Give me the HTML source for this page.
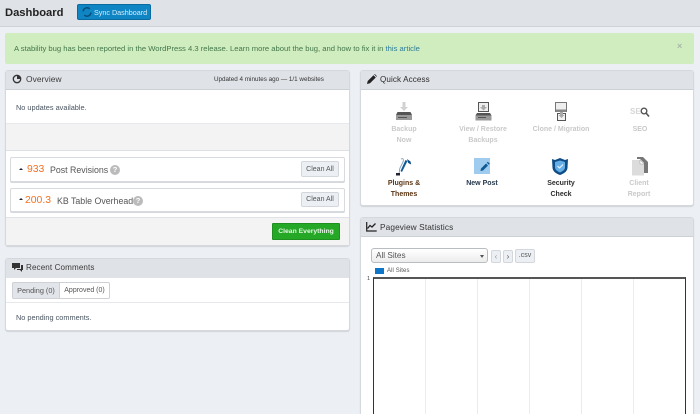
<!DOCTYPE html>
<html><head><meta charset="utf-8">
<style>
html,body{margin:0;padding:0;overflow:hidden;width:700px;height:414px}
body{background:#ecf0f5;position:relative;font-family:"Liberation Sans",sans-serif;font-size:8px;color:#444}
div,span,svg{position:absolute;box-sizing:border-box;white-space:nowrap}
#w{left:0;top:0;width:700px;height:414px;overflow:hidden;background:#ecf0f5;filter:blur(.25px)}
.panel{background:#fff;border:1px solid #d5d8dd;border-radius:3px;box-shadow:0 1px 1px #d0d3d8}
.ph{background:#dfe2e7;border-bottom:1px solid #ccd0d5}
.ttl{font-size:8.1px;color:#3b3b3b;letter-spacing:.1px}
.row{background:#fff;border:1px solid #d7dade;border-radius:2px;box-shadow:0 1px 0 #d5d8dd}
.btn{background:#ecf0f4;border:1px solid #d3d7dc;border-radius:2px;text-align:center;color:#555;font-size:7px;line-height:15px}
.q{width:10px;height:10px;border-radius:50%;background:#bbb;color:#fff;font-size:7.500px;font-weight:bold;line-height:10px;text-align:center}
.num{font-size:10.400px;color:#f37021}
.lbl{font-size:8.800px;color:#555}
.ic{width:80px;text-align:center;font-size:7px;line-height:11px;font-weight:bold;color:#c9c9c9;white-space:normal}
.on{color:#3c3c3c}
.g{top:279px;width:1px;height:135px;background:#ececec}
</style></head><body>
<div id="w">

<div style="left:0;top:0;width:700px;height:27px;background:#dfe2e7;border-bottom:1px solid #cfd2d7"></div>
<div style="left:5px;top:6px;font-size:11.200px;font-weight:bold;color:#222;line-height:15px">Dashboard</div>
<div style="left:77px;top:4px;width:74px;height:16px;background:#0f85c4;border:1px solid #0b6aa0;border-radius:2px"></div>
<svg style="left:82px;top:7px" width="10" height="10" viewBox="0 0 9 9"><path d="M1 4a3.500 3.500 0 0 1 6-2.200M8 5a3.500 3.500 0 0 1-6 2.200" fill="none" stroke="#0a4f7c" stroke-width="1.400"/></svg>
<div style="left:94px;top:7px;font-size:7.200px;line-height:11px;color:#d7eefa">Sync Dashboard</div>

<div style="left:5px;top:33px;width:689px;height:31px;background:#d0edbf;border-radius:2px"></div>
<div style="left:14px;top:43px;font-size:7.650px;line-height:11px;color:#44774b">A stability bug has been reported in the WordPress 4.3 release. Learn more about the bug, and how to fix it in <span style="position:static;color:#2d7b98">this article</span></div>
<div style="left:677px;top:41px;font-size:9px;line-height:10px;color:#a9b7a5;font-weight:bold">×</div>

<!-- Overview -->
<div class="panel" style="left:5px;top:70px;width:345px;height:176px"></div>
<div class="ph" style="left:6px;top:71px;width:343px;height:19px"></div>
<svg style="left:12px;top:74px" width="10" height="10" viewBox="0 0 10 10"><circle cx="5" cy="5" r="3.700" fill="none" stroke="#333" stroke-width="1.300"/><path d="M5 5V1.200A3.800 3.800 0 0 1 8.800 5z" fill="#333"/></svg>
<div class="ttl" style="left:26px;top:74px;line-height:11px;font-size:8.400px">Overview</div>
<div style="left:214px;top:75px;font-size:6.300px;line-height:10px;color:#333">Updated 4 minutes ago — 1/1 websites</div>
<div style="left:16px;top:102px;font-size:7.350px;line-height:11px;color:#4a5560">No updates available.</div>
<div style="left:6px;top:123px;width:343px;height:28px;background:#f3f3f3;border-top:1px solid #e6e8eb;border-bottom:1px solid #dde0e5"></div>

<div class="row" style="left:10px;top:157px;width:335px;height:25px"></div>
<div style="left:19px;top:168px;width:0;height:0;border:2px solid transparent;border-bottom:2px solid #223;border-top:0"></div>
<div class="num" style="left:27px;top:163px;line-height:14px">933</div>
<div class="lbl" style="left:50px;top:164px;line-height:13px">Post Revisions</div>
<div class="q" style="left:110px;top:165px">?</div>
<div class="btn" style="left:301px;top:161px;width:38px;height:16px">Clean All</div>

<div class="row" style="left:10px;top:188px;width:335px;height:24px"></div>
<div style="left:19px;top:198px;width:0;height:0;border:2px solid transparent;border-bottom:2px solid #223;border-top:0"></div>
<div class="num" style="left:25px;top:193px;line-height:15px">200.3</div>
<div class="lbl" style="left:57px;top:194px;line-height:14px">KB Table Overhead</div>
<div class="q" style="left:133px;top:196px">?</div>
<div class="btn" style="left:301px;top:192px;width:38px;height:15px;line-height:14px">Clean All</div>

<div style="left:6px;top:217px;width:343px;height:28px;background:#f3f3f3;border-top:1px solid #dfe2e6"></div>
<div style="left:272px;top:223px;width:68px;height:17px;background:#25a825;border:1px solid #1f8f1f;border-radius:1px;color:#e4f5e4;font-size:6.800px;font-weight:bold;line-height:15px;text-align:center">Clean Everything</div>

<!-- Recent comments -->
<div class="panel" style="left:5px;top:258px;width:345px;height:73px"></div>
<div class="ph" style="left:6px;top:259px;width:343px;height:19px;border-bottom:0"></div>
<svg style="left:12px;top:263px" width="11" height="10" viewBox="0 0 11 10"><path d="M0 0h8v5H4L2 7V5H0z" fill="#333"/><path d="M9 2h2v5h-1v2L8 7H5V6h4z" fill="#333"/></svg>
<div class="ttl" style="left:26px;top:262px;line-height:11px">Recent Comments</div>
<div style="left:12px;top:282px;width:48px;height:17px;background:#e2e5ea;border:1px solid #cdd1d6;border-radius:2px 0 0 2px;font-size:7.300px;line-height:15px;text-align:center;color:#555">Pending (0)</div>
<div style="left:60px;top:282px;width:50px;height:17px;background:#fff;border:1px solid #cdd1d6;border-left:0;border-radius:0 2px 2px 0;font-size:7px;line-height:16px;text-align:center;color:#555">Approved (0)</div>
<div style="left:6px;top:302px;width:343px;height:1px;background:#e6e8eb"></div>
<div style="left:16px;top:312px;font-size:7.350px;line-height:11px;color:#4a5560">No pending comments.</div>

<!-- Quick Access -->
<div class="panel" style="left:360px;top:70px;width:334px;height:136px"></div>
<div class="ph" style="left:361px;top:71px;width:332px;height:19px"></div>
<svg style="left:367px;top:74px" width="10" height="10" viewBox="0 0 10 10"><path d="M0 10l.7-3L6.500 1.200l2.300 2.300L3 9.300zM7.200.5l.6-.5 2.200 2.200-.5.6z" fill="#222"/></svg>
<div class="ttl" style="left:380px;top:74px;line-height:11px;color:#2c2c2c">Quick Access</div>

<!-- icons row 1 -->
<svg style="left:395px;top:102px" width="18" height="19" viewBox="0 0 18 19"><path d="M7.500 0h3v5H13l-4 4-4-4h2.500z" fill="#d2d2d2"/><path d="M2.500 10h13l1.500 3H1z" fill="#555"/><rect x="1" y="13" width="16" height="5" fill="#999"/><rect x="3" y="15" width="9" height="1" fill="#555"/></svg>
<div class="ic" style="left:364px;top:124px">Backup<br>Now</div>

<svg style="left:475px;top:102px" width="17" height="19" viewBox="0 0 17 19"><rect x="3.500" y="0.500" width="10" height="9" fill="#eee" stroke="#555"/><path d="M7 3h3v2h2l-3.500 3.500L5 5h2z" fill="#aaa"/><path d="M2 11h13l1.500 2.500H.5z" fill="#555"/><rect x=".5" y="13.500" width="16" height="5" fill="#999"/><rect x="3" y="15" width="8" height="1" fill="#555"/></svg>
<div class="ic" style="left:443px;top:124px">View / Restore<br>Backups</div>

<svg style="left:555px;top:102px" width="13" height="19" viewBox="0 0 13 19"><rect x=".5" y=".5" width="11" height="9" fill="#eee" stroke="#777"/><rect x="1" y="7.500" width="10" height="2.500" fill="#888"/><rect x="2.500" y="11.500" width="8" height="7" fill="#f3f3f3" stroke="#555"/><path d="M5 10h3v3h1.500L6.500 16 3.500 13H5z" fill="#aaa"/></svg>
<div class="ic" style="left:519px;top:124px;width:84px">Clone / Migration</div>

<div style="left:630px;top:107px;font-size:8px;line-height:10px;font-weight:bold;color:#d5d5d5">SE</div>
<svg style="left:640px;top:107px" width="10" height="11" viewBox="0 0 10 11"><circle cx="4" cy="4" r="2.800" fill="none" stroke="#555" stroke-width="1.400"/><path d="M6 6l3 3.500" stroke="#555" stroke-width="1.600"/></svg>
<div class="ic" style="left:600px;top:124px">SEO</div>

<!-- icons row 2 -->
<svg style="left:395px;top:157px" width="18" height="19" viewBox="0 0 18 19"><path d="M6 2C8 1 9 2 8 5L5 11C4 13 5 14 4 16" fill="none" stroke="#8aa9c7" stroke-width="1"/><path d="M10.500 3L5.500 14l1.500 1L12.500 4z" fill="#0f5a94"/><path d="M12 2l3.500 2.500.7 3-3-1.500z" fill="#0f4c80"/><rect x="1" y="16" width="4" height="2.500" fill="#223"/></svg>
<div class="ic on" style="left:364px;top:178px;color:#5a3514">Plugins &amp;<br>Themes</div>

<svg style="left:474px;top:158px" width="17" height="17" viewBox="0 0 17 17"><rect width="16" height="16" fill="#9ecbee"/><path d="M6.500 13l.5-2.500 5-5 2 2-5 5zM12.800 4.700l1-1 2 2-1 1z" fill="#0f5a94"/></svg>
<div class="ic on" style="left:442px;top:178px;color:#26384d">New Post</div>

<svg style="left:552px;top:158px" width="16" height="17" viewBox="0 0 16 17"><path d="M0 1l3 1 5-2 5 2 3-1-.5 9C15 14 11 16 8 17 5 16 1 14 .5 10z" fill="#0f4d86"/><path d="M3 4l5-1.500L13 4v5.500C13 12 10 13.500 8 14.500 6 13.500 3 12 3 9.500z" fill="#66aee6"/><path d="M5.500 8l2 2 3.500-3.500" fill="none" stroke="#dceefa" stroke-width="1.300"/></svg>
<div class="ic on" style="left:521px;top:178px;color:#2c2c2c">Security<br>Check</div>

<svg style="left:631px;top:157px" width="18" height="19" viewBox="0 0 18 19"><path d="M6 0h6l5 5v11h-4V6L9 2H6z" fill="#777"/><path d="M1 3h8l4 4v11.500H1z" fill="#dcdcdc"/><path d="M9 3l4 4H9z" fill="#fff" stroke="#999" stroke-width=".5"/></svg>
<div class="ic" style="left:599px;top:178px">Client<br>Report</div>

<!-- Pageview Statistics -->
<div class="panel" style="left:360px;top:217px;width:334px;height:200px"></div>
<div class="ph" style="left:361px;top:218px;width:332px;height:19px"></div>
<svg style="left:366px;top:222px" width="11" height="10" viewBox="0 0 11 10"><path d="M.7 0v9h10" fill="none" stroke="#222" stroke-width="1.200"/><path d="M1.500 6.500l2.500-3 2 1.500 3.500-3.500" fill="none" stroke="#222" stroke-width="1.300"/></svg>
<div class="ttl" style="left:380px;top:222px;line-height:11px;color:#333;font-size:8.300px">Pageview Statistics</div>

<div style="left:371px;top:248px;width:117px;height:15px;background:linear-gradient(#fff,#ececec);border:1px solid #b9bcc0;border-radius:3px;font-size:8.200px;line-height:14px;padding-left:4px;color:#555">All Sites</div>
<div style="left:480px;top:255px;width:0;height:0;border:2.500px solid transparent;border-top:3px solid #555;border-bottom:0"></div>
<div class="btn" style="left:491px;top:250px;width:10px;height:13px;font-size:8px;line-height:11px;color:#999">‹</div>
<div class="btn" style="left:503px;top:250px;width:10px;height:13px;font-size:8px;line-height:11px">›</div>
<div class="btn" style="left:515px;top:249px;width:20px;height:14px;font-size:7px;line-height:12px">.csv</div>

<div style="left:375px;top:268px;width:9px;height:6px;background:#0e76c8"></div>
<div style="left:387px;top:268px;font-size:6px;line-height:7px;color:#555;letter-spacing:.1px">All Sites</div>
<div style="left:367px;top:276px;font-size:5.500px;line-height:6px;color:#444">1</div>

<div style="left:373px;top:277px;width:313px;height:145px;border:1px solid #333;border-top:2px solid #555;background:#fff"></div>
<div class="g" style="left:425px"></div>
<div class="g" style="left:477px"></div>
<div class="g" style="left:529px"></div>
<div class="g" style="left:581px"></div>
<div class="g" style="left:633px"></div>
</div>
</body></html>
